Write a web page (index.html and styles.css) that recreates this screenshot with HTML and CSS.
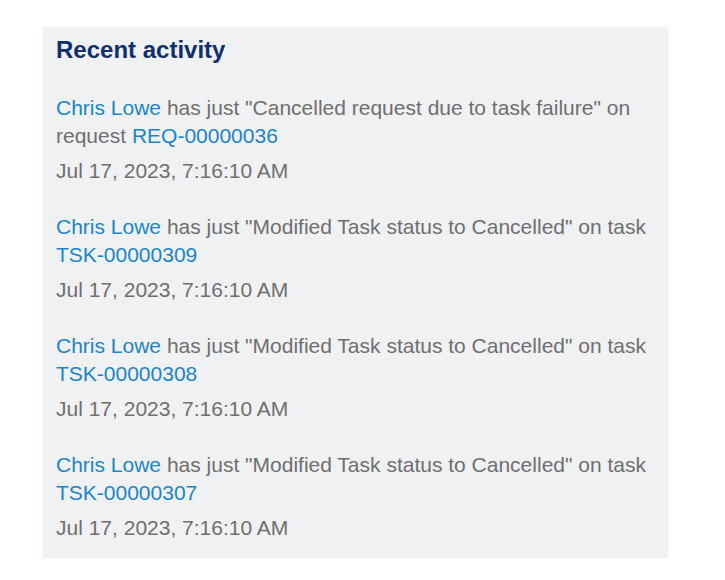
FILE: index.html
```html
<!DOCTYPE html>
<html lang="en">
<head>
<meta charset="utf-8">
<title>Recent activity</title>
<link rel="stylesheet" href="styles.css">
</head>
<body>
<section class="panel">
  <h2 class="title">Recent activity</h2>
  <ul class="feed">
    <li class="item">
      <p class="msg"><a class="link" href="#">Chris Lowe</a> has just "Cancelled request due to task failure" on request <a class="link" href="#">REQ-00000036</a></p>
      <p class="date">Jul 17, 2023, 7:16:10 AM</p>
    </li>
    <li class="item">
      <p class="msg"><a class="link" href="#">Chris Lowe</a> has just "Modified Task status to Cancelled" on task <a class="link" href="#">TSK-00000309</a></p>
      <p class="date">Jul 17, 2023, 7:16:10 AM</p>
    </li>
    <li class="item">
      <p class="msg"><a class="link" href="#">Chris Lowe</a> has just "Modified Task status to Cancelled" on task <a class="link" href="#">TSK-00000308</a></p>
      <p class="date">Jul 17, 2023, 7:16:10 AM</p>
    </li>
    <li class="item">
      <p class="msg"><a class="link" href="#">Chris Lowe</a> has just "Modified Task status to Cancelled" on task <a class="link" href="#">TSK-00000307</a></p>
      <p class="date">Jul 17, 2023, 7:16:10 AM</p>
    </li>
  </ul>
</section>
</body>
</html>
```
FILE: styles.css
```css
html, body {
  margin: 0;
  padding: 0;
  background: #ffffff;
}
body {
  font-family: "Liberation Sans", Arial, sans-serif;
  padding: 27px 0 0 43px;
}
.panel {
  box-sizing: border-box;
  width: 625px;
  height: 531px;
  background: #f0f1f3;
  padding: 8px 13px 18px 13px;
}
.title {
  margin: 0;
  font-size: 24px;
  line-height: 30px;
  font-weight: bold;
  color: #102f70;
}
.feed {
  list-style: none;
  margin: 29px 0 0 0;
  padding: 0;
  display: flex;
  flex-direction: column;
  gap: 28px;
}
.item {
  display: flex;
  flex-direction: column;
  gap: 7px;
}
.msg, .date {
  margin: 0;
  font-size: 21px;
  line-height: 28px;
  color: #6f6f6f;
}
.link {
  color: #1a86c8;
  text-decoration: none;
}
```
